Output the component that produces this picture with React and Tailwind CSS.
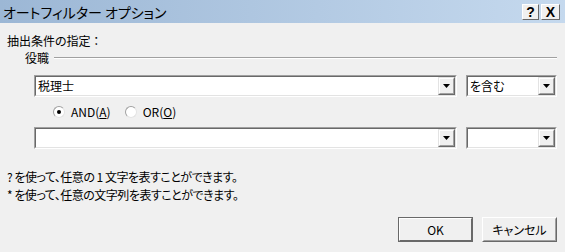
import React from "react";

const font = { fontFamily: '"Noto Sans CJK JP", "Noto Sans", sans-serif' };

// classic sunken combo box with a raised drop button
const Combo = ({ value = "", className = "" }) => (
  <div className={`h-[22px] border-t border-l border-t-[#a0a0a0] border-l-[#a0a0a0] border-b border-r border-b-white border-r-white ${className}`}>
    <div className="h-full flex border-t border-l border-t-[#696969] border-l-[#696969] border-b border-r border-b-[#e3e3e3] border-r-[#e3e3e3] bg-white">
      <div className="flex-1 pl-[2px] text-[12px] leading-[18px] text-black truncate [font-feature-settings:'palt']">
        {value}
      </div>
      <div className="w-[17px] h-full border-t border-l border-t-[#e3e3e3] border-l-[#e3e3e3] border-b border-r border-b-[#696969] border-r-[#696969]">
        <div className="h-full flex items-center justify-center bg-[#f0f0f0] border-t border-l border-t-white border-l-white border-b border-r border-b-[#a0a0a0] border-r-[#a0a0a0]">
          <svg width="7" height="4" viewBox="0 0 7 4">
            <path d="M0 0h7L3.5 4z" fill="#000" />
          </svg>
        </div>
      </div>
    </div>
  </div>
);

const Radio = ({ checked, children }) => (
  <label className="flex items-center gap-[6px]">
    <span className="w-[12px] h-[12px] rounded-full bg-white border border-t-[#a0a0a0] border-l-[#a0a0a0] border-b-[#e3e3e3] border-r-[#e3e3e3] flex items-center justify-center">
      {checked && <span className="w-[4px] h-[4px] rounded-full bg-black" />}
    </span>
    <span className="text-[12px] leading-[16px]">{children}</span>
  </label>
);

const TitleButton = ({ children, w }) => (
  <div className={`${w} h-[16px] bg-[#f0f0f0] border border-t-white border-l-white border-b-[#696969] border-r-[#696969] flex items-center justify-center text-[14px] font-bold leading-none text-black`}
    style={{ fontFamily: '"Liberation Sans", sans-serif' }}>
    {children}
  </div>
);

export default function App() {
  return (
    <div className="w-[565px] h-[252px] bg-[#f0f0f0] overflow-hidden text-black" style={font}>
      {/* Title bar */}
      <div className="h-[23px] flex items-center justify-between pl-[3px] pr-[5px] bg-gradient-to-r from-[#9cb7d5] to-[#c5d9ee]">
        <span className="text-[14px] leading-[18px] [font-feature-settings:'palt']">オートフィルター オプション</span>
        <div className="flex gap-[2px]">
          <TitleButton w="w-[17px]">?</TitleButton>
          <TitleButton w="w-[19px]">X</TitleButton>
        </div>
      </div>

      <div className="pl-[7px] pr-[8px] [font-feature-settings:'palt']">
        <div className="mt-[10px] text-[12px] leading-[16px]">抽出条件の指定 ：</div>

        {/* group header */}
        <div className="mt-[1px] ml-[18px] flex items-center gap-[5px] text-[12px] leading-[16px]">
          <span>役職</span>
          <div className="flex-1 border-t border-t-[#a0a0a0] border-b border-b-white" />
        </div>

        <div className="ml-[27px] mt-[9px] flex gap-[9px]">
          <Combo value="税理士" className="w-[423px]" />
          <Combo value="を含む" className="w-[91px]" />
        </div>

        <div className="ml-[46px] mt-[7px] flex gap-[14px] text-[12px]">
          <Radio checked>
            AND(<span className="underline">A</span>)
          </Radio>
          <Radio>
            OR(<span className="underline">O</span>)
          </Radio>
        </div>

        <div className="ml-[27px] mt-[7px] flex gap-[9px]">
          <Combo className="w-[423px]" />
          <Combo className="w-[91px]" />
        </div>

        <div className="mt-[19px] text-[12px] leading-[18px] tracking-[-0.5px]">
          <div>? を使って、任意の 1 文字を表すことができます。</div>
          <div>* を使って、任意の文字列を表すことができます。</div>
        </div>

        <div className="mt-[13px] flex justify-end gap-[9px]">
          <button className="w-[75px] h-[25px] border border-[#696969] bg-[#f0f0f0] text-[12px]">
            <div className="h-full flex items-center justify-center border border-t-white border-l-white border-b-[#696969] border-r-[#696969]">
              OK
            </div>
          </button>
          <button className="w-[75px] h-[25px] border border-t-white border-l-white border-b-[#696969] border-r-[#696969] bg-[#f0f0f0] text-[12px]">
            <div className="h-full flex items-center justify-center border border-t-[#f0f0f0] border-l-[#f0f0f0] border-b-[#a0a0a0] border-r-[#a0a0a0]">
              キャンセル
            </div>
          </button>
        </div>
      </div>
    </div>
  );
}
